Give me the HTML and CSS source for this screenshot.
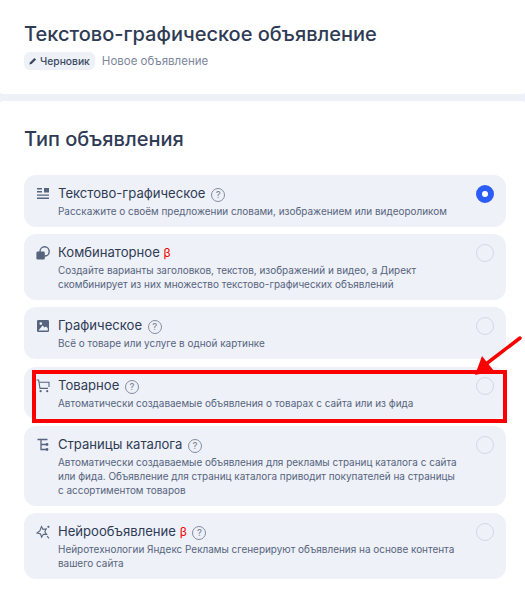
FILE: index.html
```html
<!DOCTYPE html>
<html>
<head>
    <title>Тип объявления</title>
    <link rel="stylesheet" href="styles.css">
</head>
<body>
    <header class="page-head">
        <h1>Текстово-графическое объявление</h1>
        <div class="status">
            <span class="badge">
                <svg class="pencil" viewBox="0 0 8 8"><path d="M0.4 7.6 L0.9 5.4 L5.4 0.9 L7.1 2.6 L2.6 7.1 Z" fill="#3d4a63"/></svg>
                Черновик
            </span>
            <span class="status-name">Новое объявление</span>
        </div>
    </header>

    <main class="section">
        <h2>Тип объявления</h2>

        <div class="cards">
            <div class="card">
                <svg class="icon" viewBox="0 0 14 14" fill="#56647e"><path d="M1 1h5v1.4H1zM1 4h5v1.4H1zM8 1h5v4.4H8zM1 7.4h12v1.3H1zM1 10.6h12v1.3H1z"/></svg>
                <div class="card-body">
                    <div class="card-title">Текстово-графическое <span class="help">?</span></div>
                    <p>Расскажите о своём предложении словами, изображением или видеороликом</p>
                </div>
                <span class="radio radio-on"></span>
            </div>

            <div class="card">
                <svg class="icon" viewBox="0 0 14 14"><circle cx="8.6" cy="5.4" r="4.6" fill="none" stroke="#56647e" stroke-width="1.4"/><rect x="0.4" y="5.6" width="8.4" height="8" rx="1.4" fill="#56647e"/></svg>
                <div class="card-body">
                    <div class="card-title">Комбинаторное <span class="beta">β</span></div>
                    <p>Создайте варианты заголовков, текстов, изображений и видео, а Директ скомбинирует из них множество текстово-графических объявлений</p>
                </div>
                <span class="radio"></span>
            </div>

            <div class="card">
                <svg class="icon" viewBox="0 0 14 14"><rect x="1" y="1" width="12" height="12" rx="1.2" fill="#56647e"/><circle cx="4.8" cy="4.6" r="1.3" fill="#eef1f7"/><path d="M2.4 11.4 L6.6 6.6 L8.6 8.6 L10 7.4 L11.8 9.2 V11.4 Z" fill="#eef1f7"/></svg>
                <div class="card-body">
                    <div class="card-title">Графическое <span class="help">?</span></div>
                    <p>Всё о товаре или услуге в одной картинке</p>
                </div>
                <span class="radio"></span>
            </div>

            <div class="card">
                <svg class="icon" viewBox="0 0 14 14" fill="none" stroke="#56647e" stroke-width="1.1"><path d="M0.5 1 H2.6 L4 9.4 H12"/><path d="M3 3.2 H13 V8"/><circle cx="4.6" cy="12.2" r="1.1" fill="#56647e" stroke="none"/><circle cx="11.2" cy="12.2" r="1.1" fill="#56647e" stroke="none"/></svg>
                <div class="card-body">
                    <div class="card-title">Товарное <span class="help">?</span></div>
                    <p>Автоматически создаваемые объявления о товарах с сайта или из фида</p>
                </div>
                <span class="radio"></span>
            </div>

            <div class="card">
                <svg class="icon" viewBox="0 0 14 14" fill="none" stroke="#56647e" stroke-width="1.3"><path d="M1.5 1.5 H11.5 M5 1.5 V11.5 H10 M5 6.5 H10"/><circle cx="11" cy="6.5" r="1.4" fill="#56647e" stroke="none"/><circle cx="11" cy="11.5" r="1.4" fill="#56647e" stroke="none"/></svg>
                <div class="card-body">
                    <div class="card-title">Страницы каталога <span class="help">?</span></div>
                    <p>Автоматически создаваемые объявления для рекламы страниц каталога с сайта или фида. Объявление для страниц каталога приводит покупателей на страницы с ассортиментом товаров</p>
                </div>
                <span class="radio"></span>
            </div>

            <div class="card">
                <svg class="icon" viewBox="0 0 14 14" fill="none" stroke="#56647e" stroke-width="1.1"><path d="M5.5 1.6 L7 4.4 L10.2 4 L8.8 6.8 L10.6 9.4 L7.4 9.2 L5.6 12.2 L4.6 9 L1 8 L3.8 6 Z"/><circle cx="12.4" cy="1.8" r="1.1" fill="#56647e" stroke="none"/><path d="M11 11 L13 13.4"/></svg>
                <div class="card-body">
                    <div class="card-title">Нейрообъявление <span class="beta">β</span> <span class="help">?</span></div>
                    <p>Нейротехнологии Яндекс Рекламы сгенерируют объявления на основе контента вашего сайта</p>
                </div>
                <span class="radio"></span>
            </div>
        </div>
    </main>

    <!-- red markup drawn on top of the screenshot -->
    <div class="mark-box"></div>
    <svg class="mark-arrow" viewBox="0 0 525 600"><path d="M520 338 L486 364" stroke="#fa0000" stroke-width="3.5" stroke-linecap="round"/><path d="M475 375 L482 356 L494 371 Z" fill="#fa0000"/></svg>
</body>
</html>
```

FILE: styles.css
```css
body {
    font-family: Inter, "Noto Sans", sans-serif;
    margin: 0;
    padding: 0;
    background: #eef1f7;
    color: #2f3b55;
    height: 600px;
    overflow: hidden;
    position: relative;
}

.page-head {
    padding: 21px 24px 0;
    height: 73px;
    background: #fff;
    border-radius: 0 0 3px 3px;
}

h1 {
    margin: 0;
    font-size: 20px;
    line-height: 26px;
    font-weight: 500;
}

.status {
    display: flex;
    align-items: center;
    gap: 7px;
    margin-top: 5px;
}

.badge {
    display: flex;
    align-items: center;
    gap: 3px;
    height: 18px;
    padding: 0 5px;
    background: #eef1f7;
    border-radius: 6px;
    font-size: 10.3px;
    font-weight: 500;
    color: #3d4a63;
}

.pencil {
    width: 8px;
    height: 8px;
}

.status-name {
    font-size: 11.5px;
    color: #7c879c;
}

.section {
    margin-top: 7px;
    height: 499px;
    box-sizing: border-box;
    padding: 25px 19px 0 24px;
    background: #fff;
    border-radius: 3px 3px 0 0;
}

h2 {
    margin: 0 0 22.5px;
    font-size: 20px;
    line-height: 26px;
    font-weight: 500;
}

.cards {
    display: flex;
    flex-direction: column;
    gap: 7.4px;
}

.card {
    display: flex;
    align-items: flex-start;
    background: #eef1f7;
    border-radius: 12px;
    padding: 9px 12px 9px 12px;
}

.icon {
    width: 14px;
    height: 14px;
    margin-top: 3px;
    flex-shrink: 0;
}

.card-body {
    flex: 1;
    margin-left: 8px;
    margin-right: 16px;
}

.card-title {
    height: 18px;
    font-size: 13.1px;
    line-height: 18px;
    color: #2f3b55;
}

.card p {
    margin: 2px 0 0;
    font-size: 9.95px;
    line-height: 14px;
    color: #56647e;
}

.help {
    display: inline-block;
    width: 12px;
    height: 12px;
    margin-left: 2px;
    border: 1px solid #838da0;
    border-radius: 50%;
    font-size: 9.5px;
    font-weight: 500;
    line-height: 12px;
    text-align: center;
    color: #838da0;
    vertical-align: 0;
}

.beta {
    color: #f00000;
    font-size: 12px;
}

.radio {
    width: 16px;
    height: 16px;
    margin-top: 1px;
    flex-shrink: 0;
    border: 1px solid #d3d8e2;
    border-radius: 50%;
}

.radio-on {
    width: 6px;
    height: 6px;
    border: 6px solid #2b5cf6;
    background: #fff;
}

.mark-box {
    position: absolute;
    left: 32px;
    top: 370px;
    width: 467px;
    height: 45px;
    border: 4px solid #fa0000;
}

.mark-arrow {
    position: absolute;
    left: 0;
    top: 0;
    width: 525px;
    height: 600px;
}
```
